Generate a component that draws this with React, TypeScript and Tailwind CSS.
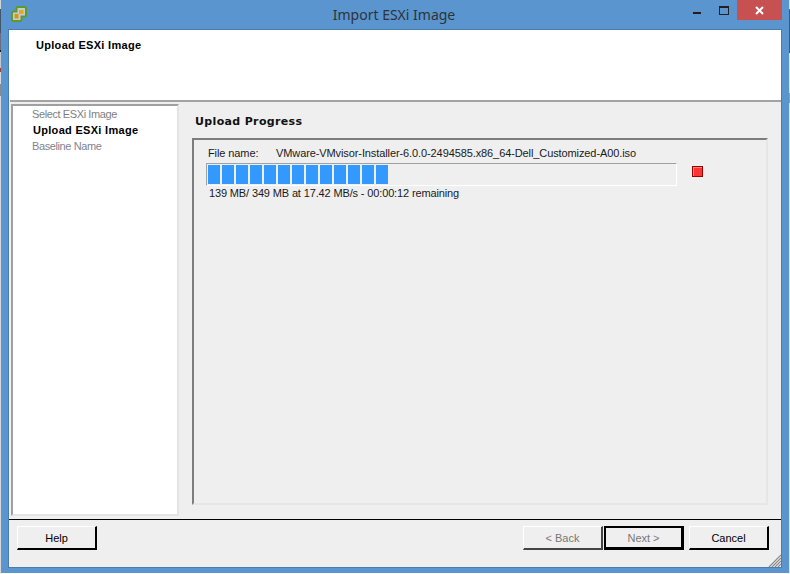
import React from "react";

const tahoma = "font-['Liberation_Sans','Noto_Sans',sans-serif] text-[11px] leading-[14px]";

function Logo() {
  return (
    <svg width="16" height="16" viewBox="0 0 16 16" className="ml-[10px] mt-[6px]">
      <path d="M5.5 2.5 Q5.5 1 7 1 H13.5 Q15 1 15 2.5 V9 Q15 10.5 13.5 10.5 H10.5 V13.5 Q10.5 15 9 15 H2.5 Q1 15 1 13.5 V7 Q1 5.5 2.5 5.5 H5.5 Z" fill="#b9d2d8" stroke="#5f9a24" strokeWidth="2" />
      <path d="M8 4 H12.5 V8 H8 Z" fill="#f2a026" />
      <path d="M3.5 8 H7.5 V12.5 H3.5 Z" fill="#ee8a12" />
    </svg>
  );
}

function Grip() {
  return (
    <svg width="13" height="13" viewBox="0 0 13 13" className="absolute right-0 bottom-0">
      <path d="M13 1 L1 13 M13 4 L4 13 M13 7 L7 13 M13 10 L10 13" stroke="#8a8a8a" strokeWidth="1.2" />
    </svg>
  );
}

export default function App() {
  const chunks = Array.from({ length: 13 }, (_, i) => i);
  return (
    <div className={`flex h-[574px] w-[790px] overflow-hidden bg-white ${tahoma}`}>
      <div className="flex w-[1px] flex-col bg-[#d8d8d8]">
        <div className="h-[9px] bg-[#cfd4da]" />
        <div className="h-[24px] bg-[#44566c]" />
        <div className="h-[17px] bg-[#6c6c7c]" />
        <div className="h-[2px] bg-[#1c1c1c]" />
        <div className="h-[16px] bg-[#c8c8c8]" />
        <div className="h-[4px] bg-[#a04030]" />
        <div className="h-[12px] bg-[#d8d8d8]" />
        <div className="h-[12px] bg-[#8a8a8a]" />
      </div>

      <div className="flex h-[573px] w-[788px] flex-col bg-[#5b95cf]">
        <div className="grid h-[29px] shrink-0 grid-cols-[1fr_auto_1fr]">
          <div>
            <Logo />
          </div>
          <div className="pr-[2px] pt-[5px] font-['Noto_Sans',sans-serif] text-[14px] leading-[19px] text-[#2e3338]">Import ESXi Image</div>
          <div className="flex justify-end pr-[7px]">
            <div className="mt-[12px] h-[2px] w-[8px] bg-[#2a1a1a]" />
            <div className="mr-[8px] ml-[18px] mt-[6px] h-[9px] w-[10px] border border-t-2 border-[#20201f]" />
            <div className="flex h-[20px] w-[45px] items-center justify-center bg-[#c75050]">
              <svg width="9" height="9" viewBox="0 0 9 9">
                <path d="M1 1 L8 8 M8 1 L1 8" stroke="#ffffff" strokeWidth="2" />
              </svg>
            </div>
          </div>
        </div>

        <div className="ml-[7px] mr-[7px] mb-[5px] flex min-h-0 flex-1 flex-col border border-[#4a7dab] bg-[#efefef]">
          <div className="h-[70px] shrink-0 bg-white pl-[27px] pt-[8px] font-bold tracking-[0.3px] text-black">Upload ESXi Image</div>
          <div className="ml-[1px] h-[2px] shrink-0 bg-[#a3a3a3]" />

          <div className="flex min-h-0 flex-1 pl-[2px] pt-[2px]">
            <div className="h-[412px] w-[168px] shrink-0 border-2 border-t-[#a0a0a0] border-l-[#a0a0a0] border-r-[#e4e4e4] border-b-[#e4e4e4] bg-white">
              <div className="flex h-[16px] items-center pl-[19px] tracking-[-0.4px] text-[#7f7f7f]">Select ESXi Image</div>
              <div className="flex h-[16px] items-center pl-[20px] font-bold tracking-[0.3px] text-black">Upload ESXi Image</div>
              <div className="flex h-[16px] items-center pl-[19px] tracking-[-0.4px] text-[#7f8490]">Baseline Name</div>
            </div>

            <div className="flex min-w-0 flex-1 flex-col pl-[13px]">
              <div className="flex h-[34px] shrink-0 items-center pl-[3px] pt-[2px] font-['DejaVu_Sans',sans-serif] text-[11px] font-bold tracking-[0.35px] text-[#111]">Upload Progress</div>
              <div className="h-[367px] w-[576px] shrink-0 border-2 border-t-[#7d7d7d] border-l-[#7d7d7d] border-r-[#e6e6e6] border-b-[#e6e6e6] pl-[12px] pt-[5px]">
                <div className="flex h-[16px] items-center pl-[2px] tracking-[-0.1px] text-[#1a1a1a]">
                  <span className="w-[68px]">File name:</span>
                  <span>VMware-VMvisor-Installer-6.0.0-2494585.x86_64-Dell_Customized-A00.iso</span>
                </div>
                <div className="mt-[2px] flex items-start">
                  <div className="flex h-[23px] w-[471px] gap-[2px] border border-t-[#a0a0a0] border-l-[#a0a0a0] border-r-white border-b-white p-[1px]">
                    {chunks.map((i) => (
                      <div key={i} className="h-full w-[12px] bg-[#3399ff]" />
                    ))}
                  </div>
                  <div className="ml-[15px] mt-[3px] h-[11px] w-[11px] border border-[#990000] bg-[#ff3333] shadow-[inset_1px_1px_0_#ff8080]" />
                </div>
                <div className="pl-[3px] tracking-[-0.14px] text-[#1a1a1a]">139 MB/ 349 MB at 17.42 MB/s - 00:00:12 remaining</div>
              </div>
            </div>
          </div>

          <div className="relative flex h-[48px] shrink-0 border-t border-black pl-[8px] pr-[12px] pt-[6px] text-black">
            <button className="h-[24px] w-[80px] border border-b-2 border-r-2 border-t-white border-l-white border-b-black border-r-black">Help</button>
            <div className="flex-1" />
            <button className="h-[24px] w-[80px] border border-b-2 border-r-2 border-t-white border-l-white border-b-[#444] border-r-[#444] text-[#777]">&lt; Back</button>
            <button className="ml-[1px] h-[24px] w-[80px] border-2 border-b-[3px] border-r-[3px] border-black text-[#777]">Next &gt;</button>
            <button className="ml-[5px] h-[24px] w-[80px] border border-b-2 border-r-2 border-t-white border-l-white border-b-black border-r-black">Cancel</button>
            <Grip />
          </div>
        </div>
      </div>

      <div className="flex w-[1px] flex-col bg-[#e2e2e2]">
        <div className="h-[9px] bg-[#d8dde4]" />
        <div className="h-[44px] bg-[#3d5a7c]" />
        <div className="h-[40px] bg-[#e2e2e2]" />
        <div className="h-[10px] bg-[#9a9a9a]" />
      </div>
    </div>
  );
}
